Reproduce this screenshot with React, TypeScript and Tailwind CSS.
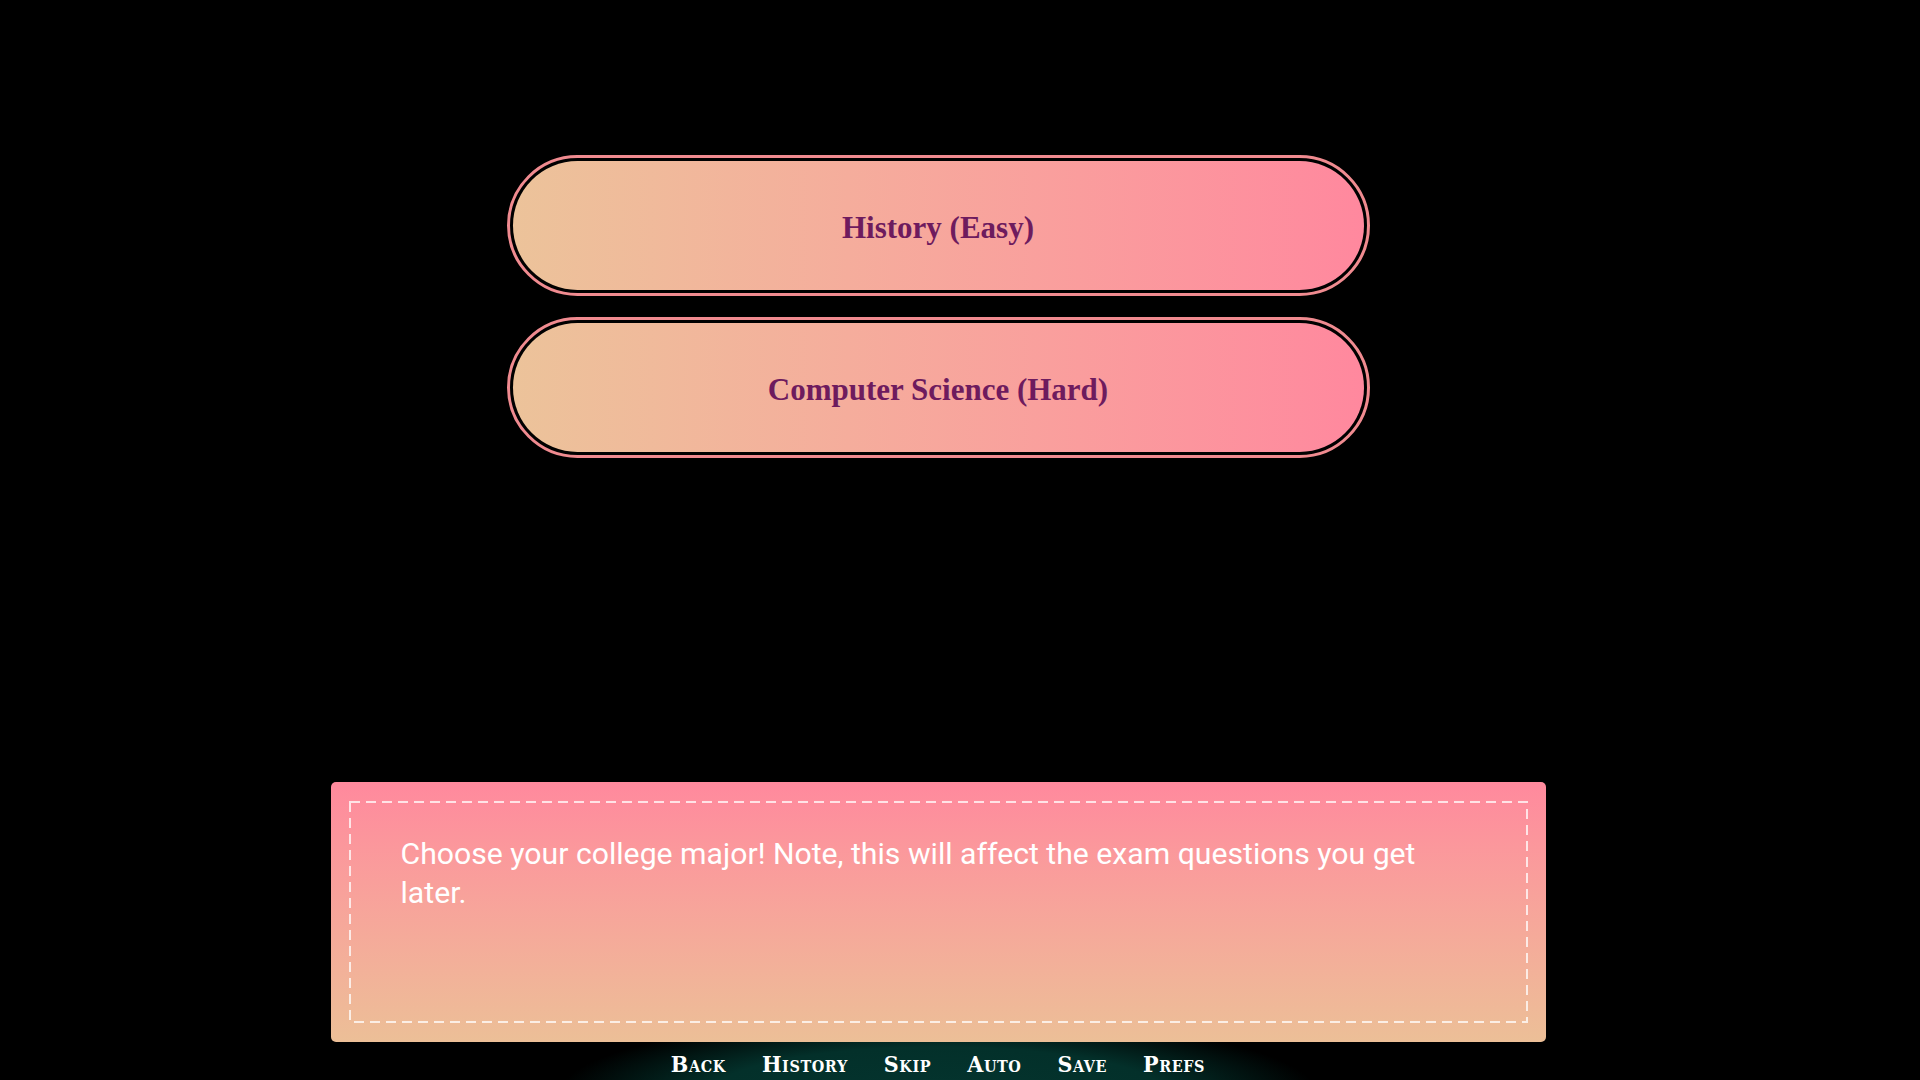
const choices = ['History (Easy)', 'Computer Science (Hard)']
const menu = ['Back', 'History', 'Skip', 'Auto', 'Save', 'Prefs']

function ChoiceButton({ label }: { label: string }) {
  return (
    <button className="h-[141px] w-[863px] rounded-full border-[3px] border-[#f08b90] bg-black p-[3px]">
      <div className="flex h-full w-full items-center justify-center rounded-full bg-gradient-to-r from-[#ecc39a] to-[#ff889e] pt-[5px]">
        <span className="font-['Liberation_Serif',serif] text-[31px] font-bold text-[#6e1b5e]">
          {label}
        </span>
      </div>
    </button>
  )
}

export default function App() {
  return (
    <div className="relative h-[1080px] w-[1920px] overflow-hidden bg-black">
      <div className="flex h-full w-[1876px] flex-col items-center">
        {/* Choices */}
        <div className="mt-[155px] flex flex-col gap-[21px]">
          {choices.map((c) => (
            <ChoiceButton key={c} label={c} />
          ))}
        </div>

        {/* Say box */}
        <div className="relative z-10 mt-[324px] h-[260px] w-[1215px] rounded-[5px] bg-gradient-to-b from-[#ff899d] to-[#ecbf97] px-[70px] pt-[52px]">
          <svg className="absolute left-[18px] top-[19px] h-[222px] w-[1179px]" fill="none">
            <rect
              x="1"
              y="1"
              width="1177"
              height="220"
              stroke="rgba(255,255,255,0.75)"
              strokeWidth="2"
              strokeDasharray="10 6"
            />
          </svg>
          <p className="relative font-['Roboto',sans-serif] text-[30.2px] leading-[39px] text-white">
            Choose your college major! Note, this will affect the exam questions you get later.
          </p>
        </div>

        {/* Quick menu */}
        <div className="relative flex h-[38px] w-full justify-center">
          <div className="pointer-events-none absolute left-1/2 top-[-27px] h-[160px] w-[760px] -translate-x-1/2 bg-[radial-gradient(closest-side,#04342e_0%,#03302a_60%,transparent_100%)]" />
          <div className="relative flex items-center gap-[36px] pt-[6px] font-['DejaVu_Serif',serif] text-[23px] font-bold leading-[32px] tracking-[0.6px] text-white [font-stretch:condensed] [font-variant:small-caps]">
            {menu.map((m) => (
              <span key={m}>{m}</span>
            ))}
          </div>
        </div>
      </div>
    </div>
  )
}
